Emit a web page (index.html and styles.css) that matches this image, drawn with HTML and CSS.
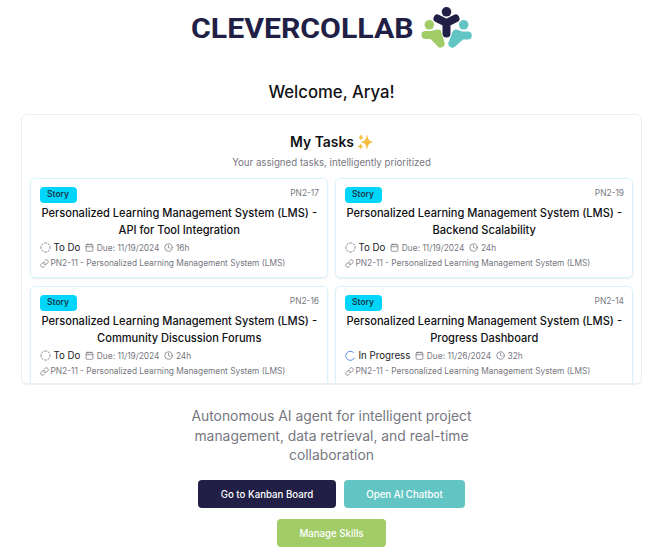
FILE: index.html
```html
<!DOCTYPE html>
<html lang="en">
<head>
<meta charset="utf-8">
<title>CleverCollab</title>
<link rel="stylesheet" href="styles.css">
</head>
<body>
<svg class="symbols" aria-hidden="true">
  <symbol id="todo" viewBox="0 0 24 24"><path d="M10.1 2.18a9.93 9.93 0 0 1 3.8 0M17.6 3.71a9.95 9.95 0 0 1 2.69 2.7M21.82 10.1a9.93 9.93 0 0 1 0 3.8M20.29 17.6a9.95 9.95 0 0 1-2.7 2.69M13.9 21.82a9.94 9.94 0 0 1-3.8 0M6.4 20.29a9.95 9.95 0 0 1-2.69-2.7M2.18 13.9a9.93 9.93 0 0 1 0-3.8M3.71 6.4a9.95 9.95 0 0 1 2.7-2.69"/></symbol>
  <symbol id="progress" viewBox="0 0 24 24"><path d="M20.500 17.300a10 10 0 1 1-2-11.900"/></symbol>
  <symbol id="calendar" viewBox="0 0 24 24"><path d="M8 2v4M16 2v4M3 10h18"/><rect x="3" y="4" width="18" height="18" rx="2"/></symbol>
  <symbol id="clock" viewBox="0 0 24 24"><circle cx="12" cy="12" r="10"/><path d="M12 6v6l4 2"/></symbol>
  <symbol id="link" viewBox="0 0 24 24"><path d="M10 13a5 5 0 0 0 7.54.54l3-3a5 5 0 0 0-7.07-7.07l-1.72 1.71M14 11a5 5 0 0 0-7.54-.54l-3 3a5 5 0 0 0 7.07 7.07l1.71-1.71"/></symbol>
</svg>
<main class="page">
  <header class="logo">
    <svg width="284" height="52" viewBox="0 0 284 52" role="img" aria-label="CLEVERCOLLAB">
      <text class="wordmark" x="1" y="38" textLength="222.500" lengthAdjust="spacingAndGlyphs">CLEVERCOLLAB</text>
      <g class="green"><circle cx="239.300" cy="24.800" r="4.800"/><path d="M235.500 35H242L250.500 43.500M242 35L248 33.500L250.500 43.500"/></g>
      <g class="teal"><circle cx="273.700" cy="24.800" r="4.800"/><path d="M277.800 35.500H271.500L262.500 43.500M271.500 35.500L266 33.500L262.500 43.500"/></g>
      <g class="navy halo"><path d="M247.500 18.500L256.500 23L265.500 18.500M256.500 23V33.500"/></g>
      <g class="navy"><circle cx="256.500" cy="11.800" r="4.800"/><path d="M247.500 18.500L256.500 23L265.500 18.500M256.500 23V33.500"/></g>
    </svg>
  </header>
  <h1 class="welcome">Welcome, Arya!</h1>
  <section class="panel">
    <h2 class="panel-title">My Tasks
      <svg class="sparkles" viewBox="0 0 16 16"><path d="M10 1.500Q10.800 7.500 15.500 8Q10.800 8.700 10 14.500Q9.200 8.700 4.500 8Q9.200 7.500 10 1.500ZM4 1Q4.400 3.100 6.200 3.500Q4.400 3.900 4 6Q3.600 3.900 1.800 3.500Q3.600 3.100 4 1ZM3.500 10Q3.900 12.100 5.700 12.500Q3.900 12.900 3.500 15Q3.100 12.900 1.300 12.500Q3.100 12.100 3.500 10Z"/></svg>
    </h2>
    <p class="panel-subtitle">Your assigned tasks, intelligently prioritized</p>
    <div class="tasks">
      <article class="task">
        <div class="task-top"><span class="tag">Story</span><span class="key">PN2-17</span></div>
        <h3>Personalized Learning Management System (LMS) -<br>API for Tool Integration</h3>
        <div class="meta"><svg class="state"><use href="#todo"/></svg><b>To Do</b><svg><use href="#calendar"/></svg><span>Due: 11/19/2024</span><svg><use href="#clock"/></svg><span>16h</span></div>
        <div class="parent"><svg><use href="#link"/></svg><span>PN2-11 - Personalized Learning Management System (LMS)</span></div>
      </article>
      <article class="task">
        <div class="task-top"><span class="tag">Story</span><span class="key">PN2-19</span></div>
        <h3>Personalized Learning Management System (LMS) -<br>Backend Scalability</h3>
        <div class="meta"><svg class="state"><use href="#todo"/></svg><b>To Do</b><svg><use href="#calendar"/></svg><span>Due: 11/19/2024</span><svg><use href="#clock"/></svg><span>24h</span></div>
        <div class="parent"><svg><use href="#link"/></svg><span>PN2-11 - Personalized Learning Management System (LMS)</span></div>
      </article>
      <article class="task">
        <div class="task-top"><span class="tag">Story</span><span class="key">PN2-16</span></div>
        <h3>Personalized Learning Management System (LMS) -<br>Community Discussion Forums</h3>
        <div class="meta"><svg class="state"><use href="#todo"/></svg><b>To Do</b><svg><use href="#calendar"/></svg><span>Due: 11/19/2024</span><svg><use href="#clock"/></svg><span>24h</span></div>
        <div class="parent"><svg><use href="#link"/></svg><span>PN2-11 - Personalized Learning Management System (LMS)</span></div>
      </article>
      <article class="task">
        <div class="task-top"><span class="tag">Story</span><span class="key">PN2-14</span></div>
        <h3>Personalized Learning Management System (LMS) -<br>Progress Dashboard</h3>
        <div class="meta"><svg class="state active"><use href="#progress"/></svg><b>In Progress</b><svg><use href="#calendar"/></svg><span>Due: 11/26/2024</span><svg><use href="#clock"/></svg><span>32h</span></div>
        <div class="parent"><svg><use href="#link"/></svg><span>PN2-11 - Personalized Learning Management System (LMS)</span></div>
      </article>
    </div>
  </section>
  <p class="lead">Autonomous AI agent for intelligent project<br>management, data retrieval, and real-time<br>collaboration</p>
  <nav class="actions">
    <button class="btn kanban">Go to Kanban Board</button>
    <button class="btn chatbot">Open AI Chatbot</button>
    <button class="btn skills">Manage Skills</button>
  </nav>
</main>
</body>
</html>
```
FILE: styles.css
```css
* { box-sizing: border-box; margin: 0; padding: 0; }
body { background: #fff; color: #111114; font-family: Inter, sans-serif; overflow: hidden; }
.symbols { display: none; }
.page { width: 621px; height: 559px; margin-left: 21px; display: flex; flex-direction: column; align-items: center; overflow: hidden; }
.logo { height: 52px; }
.logo svg { display: block; }
.wordmark { font: 700 28px Roboto, sans-serif; fill: #211f46; }
.green, .teal, .navy { fill: none; stroke-width: 8; stroke-linecap: round; stroke-linejoin: round; }
.green { stroke: #a2cc68; }
.green path { fill: #a2cc68; }
.teal { stroke: #62c5c3; }
.teal path { fill: #62c5c3; }
.navy { stroke: #211f46; }
.logo circle { stroke: none; }
.green circle { fill: #a2cc68; }
.teal circle { fill: #62c5c3; }
.navy circle { fill: #211f46; }
.navy.halo { stroke: #fff; stroke-width: 10; }
.welcome { margin-top: 28px; font-size: 16.700px; line-height: 24px; font-weight: 500; }
.panel { width: 621px; height: 270px; margin-top: 10px; padding: 18px 8px 0; border: 1px solid #eeeef0; border-radius: 6px; box-shadow: 0 1px 1px rgba(0, 0, 0, .07); overflow: hidden; flex: none; }
.panel-title { display: flex; justify-content: center; align-items: center; gap: 3px; font-size: 13.900px; line-height: 18px; font-weight: 600; }
.sparkles { width: 16px; height: 16px; fill: #f9bd40; stroke: #f9bd40; stroke-width: .6; stroke-linejoin: round; }
.panel-subtitle { margin-top: 5px; text-align: center; font-size: 9.700px; line-height: 14px; color: #77777f; }
.tasks { margin-top: 8px; display: grid; grid-template-columns: 298px 298px; justify-content: space-between; row-gap: 8px; }
.task { height: 100px; padding: 8px 8px 8px 8.500px; border: 1px solid #d5f4fa; border-radius: 5px; box-shadow: 0 1px 2px rgba(0, 0, 0, .08); }
.task-top { display: flex; justify-content: space-between; height: 18px; }
.tag { width: 37px; height: 15.500px; border-radius: 4px; background: #00d5fb; font-size: 8.400px; line-height: 15px; font-weight: 600; text-align: center; color: #123b4b; }
.key { font-size: 8.400px; line-height: 12px; color: #77777f; }
.task h3 { margin: 0 -5px; text-align: center; font-size: 11.080px; line-height: 16.600px; font-weight: 500; white-space: nowrap; }
.meta, .parent { display: flex; align-items: center; color: #77777f; font-size: 8.330px; white-space: nowrap; }
.meta { height: 17px; margin-top: 1px; }
.parent { height: 14px; }
.meta b { margin: 0 5px 0 3px; color: #222226; font-size: 9.700px; font-weight: 400; }
.meta span { margin: 0 5px 0 2.500px; }
.parent span { margin-left: 2px; }
.task svg { width: 9px; height: 9px; flex: none; fill: none; stroke: currentColor; stroke-width: 2; stroke-linecap: round; stroke-linejoin: round; }
.task svg.state { width: 11px; height: 11px; }
.task svg.active { stroke: #5684ed; }
.lead { margin-top: 23px; text-align: center; color: #77777f; font-size: 13.860px; line-height: 19.500px; }
.actions { width: 300px; margin-top: 14.500px; display: flex; flex-wrap: wrap; justify-content: center; gap: 11px 8px; }
.btn { height: 28px; border: 0; border-radius: 4px; color: #fff; font: 500 9.700px Inter, sans-serif; }
.kanban { width: 138px; background: #211f46; }
.chatbot { width: 121px; background: #62c5c3; }
.skills { width: 109px; background: #a2cc68; }
```
